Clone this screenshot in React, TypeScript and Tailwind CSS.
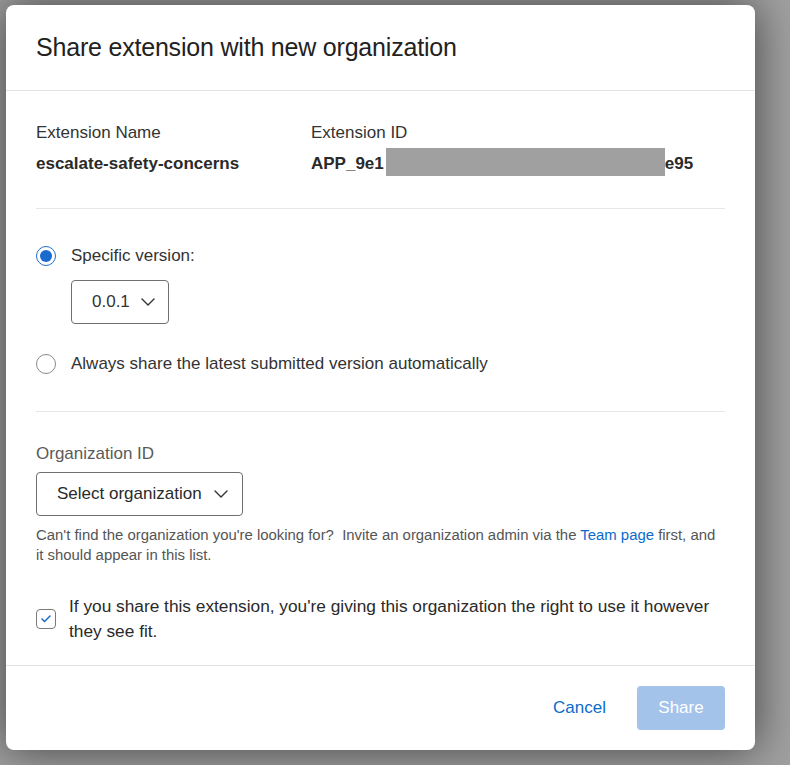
import { Check } from "lucide-react";

const font = { fontFamily: '"Liberation Sans", Arial, sans-serif' };

function Chevron() {
  return (
    <svg width="14" height="8" viewBox="0 0 14 8" fill="none" className="shrink-0">
      <polyline points="1,1 7,7 13,1" stroke="#333" strokeWidth="1.4" strokeLinecap="round" strokeLinejoin="round" />
    </svg>
  );
}

export default function App() {
  return (
    <div className="w-[790px] h-[765px] bg-[#a0a0a0] overflow-hidden pt-[5px] pl-[6px]" style={font}>
      <div className="w-[749px] h-[745px] bg-white rounded-[8px] shadow-[0_0_45px_rgba(0,0,0,0.6)] flex flex-col text-[#333]">
        {/* header */}
        <div className="h-[86px] shrink-0 border-b border-[#e3e3e3] flex items-center px-[30px]">
          <h1 className="text-[25px] text-[#222] tracking-[-0.2px]">Share extension with new organization</h1>
        </div>

        <div className="flex-1 px-[30px]">
          <div className="grid grid-cols-[275px_1fr] pt-[32px] pb-[34px] border-b border-[#e6e6e6] text-[17px] leading-[20px]">
            <div>
              <div>Extension Name</div>
              <div className="font-bold mt-[11px] text-[#2a2a2a]">escalate-safety-concerns</div>
            </div>
            <div>
              <div>Extension ID</div>
              <div className="font-bold mt-[11px] text-[#2a2a2a] flex items-center h-[20px]">
                <span>APP_9e1</span>
                <span className="inline-block w-[279px] h-[28px] mt-[-5px] ml-[2px] bg-[#a0a0a0] shrink-0" />
                <span>e95</span>
              </div>
            </div>
          </div>

          <div className="pt-[37px] pb-[37px] border-b border-[#e6e6e6] text-[17px] leading-[20px]">
            <label className="flex items-center gap-[15px] h-[20px]">
              <span className="w-[20px] h-[20px] rounded-full border-[1.5px] border-[#1f6fd1] flex items-center justify-center shrink-0">
                <span className="w-[12px] h-[12px] rounded-full bg-[#1a6bd0]" />
              </span>
              <span>Specific version:</span>
            </label>
            <div className="ml-[35px] mt-[14px] w-[98px] h-[44px] border border-[#6f6f6f] rounded-[4px] flex items-center pl-[20px] gap-[11px]">
              <span>0.0.1</span>
              <Chevron />
            </div>
            <label className="flex items-center gap-[15px] mt-[30px] h-[20px]">
              <span className="w-[20px] h-[20px] rounded-full border border-[#8a8a8a] shrink-0" />
              <span>Always share the latest submitted version automatically</span>
            </label>
          </div>

          <div className="pt-[32px]">
            <div className="text-[17px] text-[#5a5a5a] leading-[20px]">Organization ID</div>
            <div className="mt-[8px] w-[207px] h-[44px] border border-[#6f6f6f] rounded-[4px] flex items-center pl-[20px] gap-[12px] text-[17px] text-[#2a2a2a]">
              <span>Select organization</span>
              <Chevron />
            </div>
            <p className="mt-[9px] text-[14.9px] leading-[20px] text-[#555]">
              Can't find the organization you're looking for?&nbsp; Invite an organization admin via the{" "}
              <span className="text-[#0b6bcb]">Team page</span> first, and
              <br />
              it should appear in this list.
            </p>
            <label className="flex items-center gap-[13px] mt-[29px]">
              <span className="w-[20px] h-[20px] rounded-[4px] border border-[#7a7a7a] flex items-center justify-center shrink-0">
                <Check className="w-[12px] h-[12px] text-[#1a6bd0]" strokeWidth={3} />
              </span>
              <span className="text-[17.3px] leading-[25px] text-[#2a2a2a]">
                If you share this extension, you're giving this organization the right to use it however they see fit.
              </span>
            </label>
          </div>
        </div>

        {/* footer */}
        <div className="h-[85px] shrink-0 border-t border-[#e3e3e3] flex items-center justify-end px-[30px] gap-[31px]">
          <button className="text-[17px] text-[#0b6bcb]">Cancel</button>
          <button className="w-[88px] h-[44px] rounded-[4px] bg-[#a3c3ea] text-white text-[17px]">Share</button>
        </div>
      </div>
    </div>
  );
}
